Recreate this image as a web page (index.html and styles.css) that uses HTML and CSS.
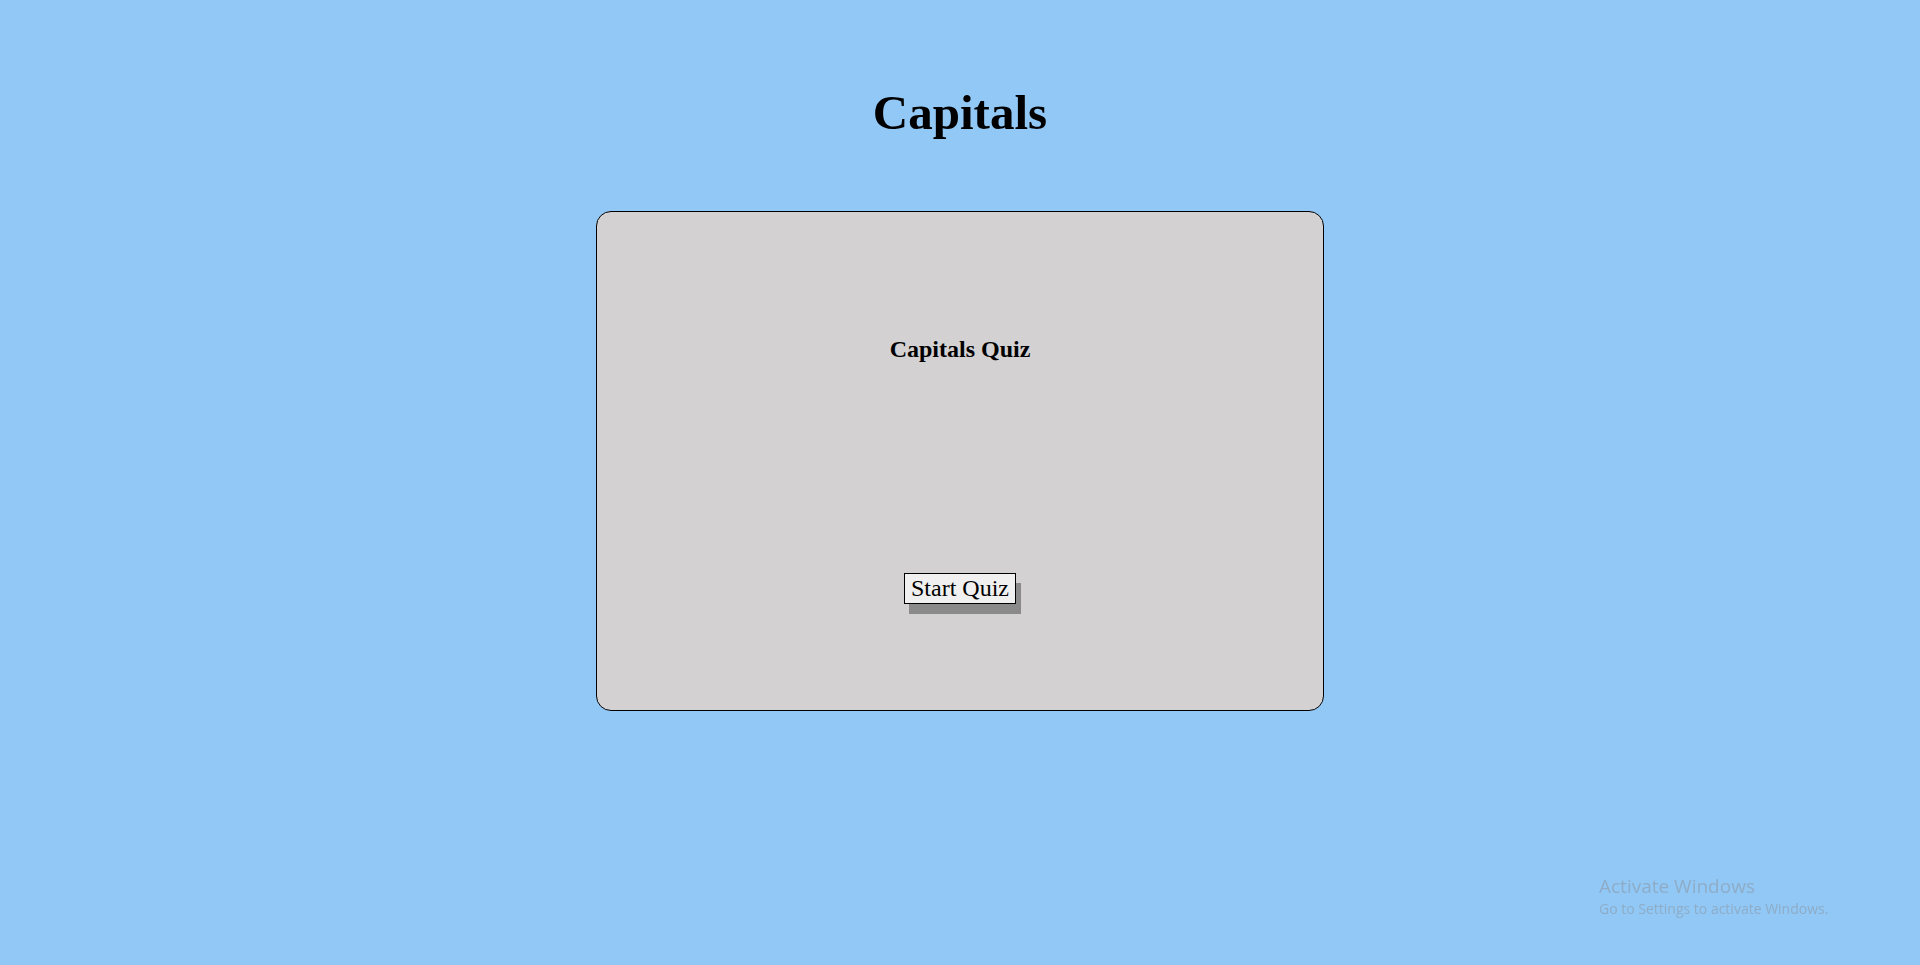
FILE: index.html
```html
<!DOCTYPE html>
<html lang="en">
<head>
<meta charset="utf-8">
<title>Capitals</title>
<link rel="stylesheet" href="styles.css">
</head>
<body>
<h1 class="page-title">Capitals</h1>
<main class="quiz-card">
  <h2 class="quiz-title">Capitals Quiz</h2>
  <button class="start-btn" type="button">Start Quiz</button>
</main>
<div class="watermark">
  <div class="wm-title">Activate Windows</div>
  <div class="wm-sub">Go to Settings to activate Windows.</div>
</div>
</body>
</html>
```

FILE: styles.css
```css
html, body {
  margin: 0;
  padding: 0;
}
body {
  background: #91c8f6;
  font-family: "Liberation Serif", "Times New Roman", serif;
  color: #000;
  min-height: 965px;
  display: flex;
  flex-direction: column;
  align-items: center;
}
.page-title {
  font-size: 49px;
  font-weight: bold;
  margin: 86px 0 0;
  line-height: 53px;
  text-align: center;
}
.quiz-card {
  box-sizing: border-box;
  width: 728px;
  height: 500px;
  margin-top: 72px;
  background: #d3d1d2;
  border: 1px solid #000;
  border-radius: 15px;
  display: flex;
  flex-direction: column;
  align-items: center;
  padding-top: 124px;
}
.quiz-title {
  font-size: 24px;
  font-weight: bold;
  margin: 0;
  line-height: 26px;
}
.start-btn {
  margin-top: 211px;
  font-family: "Liberation Serif", "Times New Roman", serif;
  font-size: 24px;
  line-height: 27px;
  padding: 1px 6px;
  background: #f0f0f0;
  color: #000;
  border: 1px solid #000;
  border-radius: 0;
  box-shadow: 5px 10px 0 #8a8a8a;
  cursor: pointer;
}
.watermark {
  position: fixed;
  left: 1599px;
  top: 873px;
  font-family: "Open Sans", "Noto Sans", sans-serif;
  color: rgba(140, 150, 160, 0.55);
}
.wm-title {
  font-size: 19px;
  line-height: 26px;
}
.wm-sub {
  font-size: 14px;
  line-height: 20px;
}
```
